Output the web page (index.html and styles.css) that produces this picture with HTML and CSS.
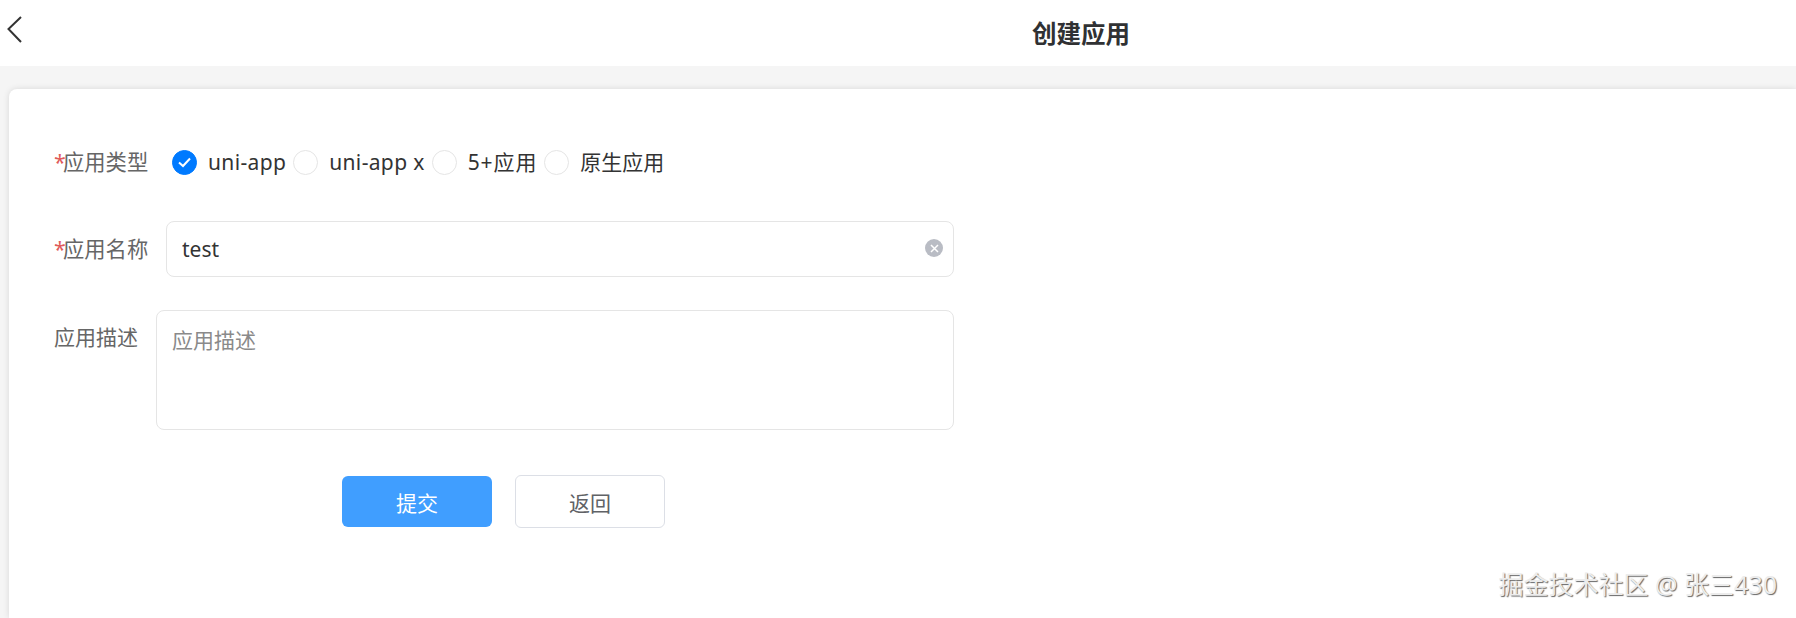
FILE: index.html
```html
<!DOCTYPE html>
<html lang="zh-CN">
<head>
  <meta charset="UTF-8" />
  <meta name="viewport" content="width=device-width, initial-scale=1.0"/>
  <title>创建应用</title>
  <link rel="stylesheet" href="styles.css">
</head>
<body>
  <header class="nav-bar">
    <button class="back-btn" aria-label="返回">
      <svg width="16" height="28" viewBox="0 0 16 28" fill="none" stroke="#333" stroke-width="2">
        <path d="M14 1 L1.5 13 L14 26"/>
      </svg>
    </button>
    <h1 class="nav-title">创建应用</h1>
  </header>
  <main class="page">
    <form class="card">
      <div class="form-row type-row">
        <label class="form-label"><span class="star">*</span>应用类型</label>
        <div class="radio-group">
          <div class="radio-item">
            <span class="radio checked">
              <svg width="13" height="11" viewBox="0 0 13 11" fill="none" stroke="#fff" stroke-width="2"><path d="M1 5.5 L5 9 L12 1.5"/></svg>
            </span>
            <span class="radio-text latin">uni-app</span>
          </div>
          <div class="radio-item"><span class="radio"></span><span class="radio-text latin">uni-app x</span></div>
          <div class="radio-item"><span class="radio"></span><span class="radio-text mixed">5+应用</span></div>
          <div class="radio-item"><span class="radio"></span><span class="radio-text">原生应用</span></div>
        </div>
      </div>
      <div class="form-row name-row">
        <label class="form-label"><span class="star">*</span>应用名称</label>
        <div class="input-wrap">
          <input class="text-input" type="text" value="test">
          <span class="clear-icon">
            <svg width="9" height="9" viewBox="0 0 9 9" stroke="#fff" stroke-width="1.5"><path d="M1 1 L8 8 M8 1 L1 8"/></svg>
          </span>
        </div>
      </div>
      <div class="form-row desc-row">
        <label class="form-label">应用描述</label>
        <textarea class="text-area" placeholder="应用描述"></textarea>
      </div>
      <div class="btn-row">
        <button type="button" class="submit-btn">提交</button>
        <button type="button" class="cancel-btn">返回</button>
      </div>
    </form>
  </main>
  <div class="watermark">掘金技术社区 @ 张三430</div>
</body>
</html>
```

FILE: styles.css
```css
* { box-sizing: border-box; }
html, body {
  margin: 0;
  height: 100%;
  overflow: hidden;
}
body {
  font-family: "Noto Sans", "Noto Sans CJK SC", sans-serif;
  background: #f5f5f5;
  color: #333;
  display: flex;
  flex-direction: column;
}
.nav-bar {
  height: 66px;
  background: #fff;
  display: flex;
  align-items: flex-start;
  flex-shrink: 0;
}
.back-btn {
  background: none;
  border: none;
  padding: 0;
  margin: 16px 0 0 7px;
  height: 28px;
  cursor: pointer;
}
.nav-title {
  margin: 17px 0 0 1009px;
  font-size: 24.5px;
  line-height: 34px;
  font-weight: 700;
  color: #303133;
}
.page {
  flex: 1;
  padding: 23px 0 0 9px;
}
.card {
  height: 100%;
  background: #fff;
  border-radius: 8px 0 0 0;
  box-shadow: 0 0 6px rgba(0,0,0,0.12);
  padding: 61px 0 0 45px;
}
.form-row {
  display: flex;
}
.form-label {
  font-size: 21.3px;
  line-height: 25px;
  color: #666;
  white-space: nowrap;
}
.star {
  display: inline-block;
  width: 9px;
  color: #e05a5a;
}
.type-row {
  height: 25px;
  gap: 25px;
  margin-bottom: 46px;
}
.type-row .form-label, .name-row .form-label {
  width: 93px;
}
.type-row .form-label {
  margin-top: -1px;
}
.name-row .form-label {
  margin-bottom: 2px;
}
.radio-group {
  display: flex;
  gap: 7px;
}
.radio-item {
  display: flex;
  align-items: center;
  gap: 11px;
}
.radio {
  width: 25px;
  height: 25px;
  border-radius: 50%;
  border: 1px solid #e5e5e5;
  display: flex;
  align-items: center;
  justify-content: center;
}
.radio.checked {
  background: #007aff;
  border-color: #007aff;
}
.radio-text {
  font-size: 21px;
  line-height: 25px;
  color: #333;
  white-space: nowrap;
}
.radio-text.latin {
  letter-spacing: 0.35px;
}
.radio-text.mixed {
  letter-spacing: 0.9px;
}
.name-row {
  gap: 19px;
  align-items: center;
  margin-bottom: 33px;
}
.input-wrap {
  position: relative;
  width: 788px;
  height: 56px;
}
.text-input {
  width: 100%;
  height: 100%;
  border: 1px solid #e5e5e5;
  border-radius: 8px;
  padding: 0 50px 0 15px;
  font: inherit;
  font-size: 21px;
  color: #333;
  outline: none;
}
.clear-icon {
  position: absolute;
  right: 11px;
  top: 18px;
  width: 18px;
  height: 18px;
  border-radius: 50%;
  background: #b9bcc4;
  display: flex;
  align-items: center;
  justify-content: center;
}
.desc-row {
  gap: 18px;
  margin-bottom: 45px;
}
.desc-row .form-label {
  width: 84px;
  padding-top: 15px;
  font-size: 21px;
}
.text-area {
  width: 798px;
  height: 120px;
  border: 1px solid #e5e5e5;
  border-radius: 8px;
  padding: 14px 15px;
  font: inherit;
  font-size: 21px;
  line-height: 30px;
  resize: none;
  outline: none;
}
.text-area::placeholder {
  color: #8a8a8a;
  opacity: 1;
}
.btn-row {
  display: flex;
  align-items: center;
  gap: 23px;
  padding-left: 288px;
}
.submit-btn, .cancel-btn {
  width: 150px;
  font: inherit;
  font-size: 21px;
  border-radius: 6px;
  cursor: pointer;
}
.submit-btn {
  height: 51px;
  background: #409eff;
  border: none;
  color: #fff;
}
.cancel-btn {
  height: 53px;
  background: #fff;
  border: 1px solid #dcdfe6;
  color: #606266;
}
.watermark {
  position: absolute;
  right: 19px;
  bottom: 17px;
  font-size: 25px;
  line-height: 34px;
  color: #ececec;
  text-shadow: 1px 1px 1px #666;
  white-space: nowrap;
}
```
